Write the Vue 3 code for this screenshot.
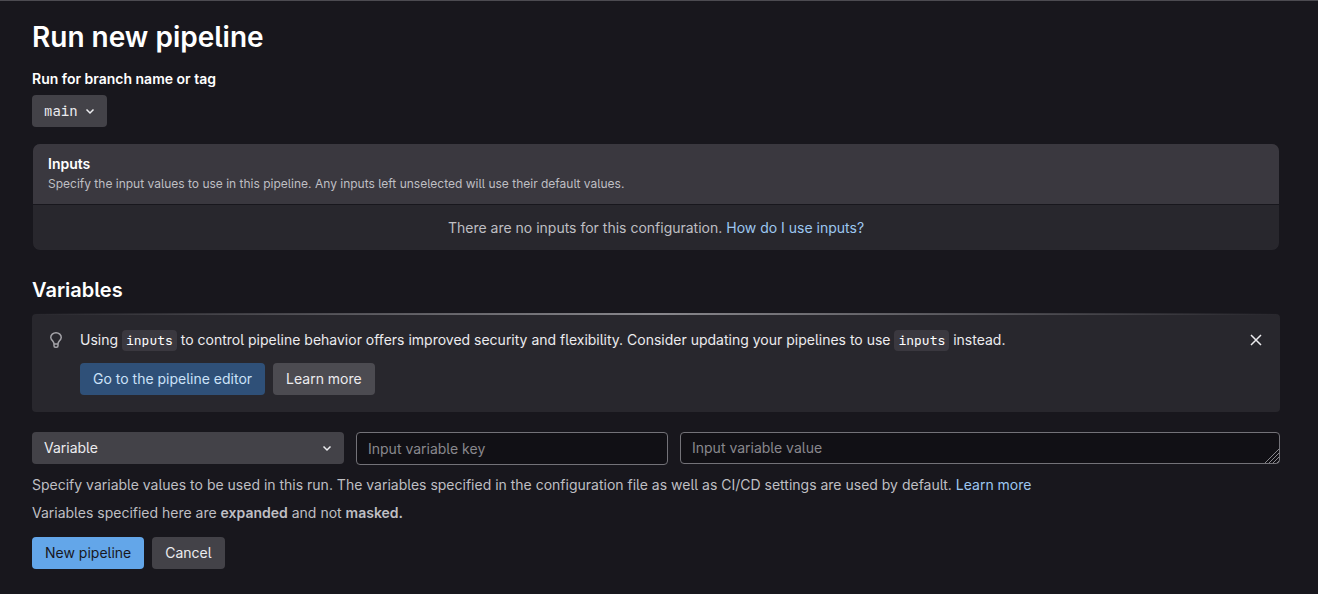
<script setup>
import { ref } from 'vue'

const branch = ref('main')
const type = ref('Variable')
const key = ref('')
const value = ref('')
</script>

<template>
  <main class="page">
    <h1 class="title">Run new pipeline</h1>

    <form class="form" @submit.prevent>
      <label class="label" for="branch">Run for branch name or tag</label>
      <div class="picker branch">
        <select id="branch" v-model="branch">
          <option>main</option>
        </select>
        <svg class="chevron" viewBox="0 0 16 16" aria-hidden="true">
          <path d="M4.5 6.5 8 10l3.5-3.5" />
        </svg>
      </div>

      <section class="card">
        <header class="card-head">
          <h2 class="card-title">Inputs</h2>
          <p class="card-text">Specify the input values to use in this pipeline. Any inputs left unselected will use their default values.</p>
        </header>
        <p class="card-body">There are no inputs for this configuration. <a href="#">How do I use inputs?</a></p>
      </section>

      <h2 class="subtitle">Variables</h2>

      <section class="tip">
        <svg class="bulb" viewBox="0 0 16 16" aria-hidden="true">
          <path d="M6 12c0-1.600-.6-2.200-1.500-3.300A5 5 0 0 1 2.750 5.500a5.250 4.750 0 0 1 10.500 0 5 5 0 0 1-1.750 3.200C10.600 9.800 10 10.400 10 12M6 12h4v1.800c0 .9-.6 1.450-1.400 1.450H7.400C6.600 15.250 6 14.700 6 13.800z" />
        </svg>
        <div class="tip-content">
          <p class="tip-text">Using <code>inputs</code> to control pipeline behavior offers improved security and flexibility. Consider updating your pipelines to use <code>inputs</code> instead.</p>
          <div class="actions">
            <button type="button" class="btn info">Go to the pipeline editor</button>
            <button type="button" class="btn muted">Learn more</button>
          </div>
        </div>
        <button type="button" class="close" aria-label="Dismiss">
          <svg viewBox="0 0 16 16" aria-hidden="true">
            <path d="m3 3 10 10m0-10L3 13" />
          </svg>
        </button>
      </section>

      <div class="row">
        <div class="picker">
          <select v-model="type" aria-label="Type">
            <option>Variable</option>
            <option>File</option>
          </select>
          <svg class="chevron" viewBox="0 0 16 16" aria-hidden="true">
            <path d="M4.500 6.500 8 10l3.500-3.500" />
          </svg>
        </div>
        <input v-model="key" class="field" type="text" placeholder="Input variable key" aria-label="Input variable key">
        <div class="area">
          <textarea v-model="value" class="field" rows="1" placeholder="Input variable value" aria-label="Input variable value"></textarea>
          <svg class="grip" viewBox="0 0 14 14" aria-hidden="true">
            <path d="M0 14 14 0M4 14 14 4M8 14l6-6M12 14l2-2" />
          </svg>
        </div>
      </div>

      <p class="help">Specify variable values to be used in this run. The variables specified in the configuration file as well as CI/CD settings are used by default. <a href="#">Learn more</a></p>
      <p class="help">Variables specified here are <strong>expanded</strong> and not <strong>masked.</strong></p>

      <div class="actions">
        <button type="submit" class="btn primary">New pipeline</button>
        <button type="button" class="btn">Cancel</button>
      </div>
    </form>
  </main>
</template>

<style>
body {
  background: #18171d;
}
</style>

<style scoped>
.page {
  box-sizing: border-box;
  border-top: 1px solid #4c4b51;
  padding: 16px 38px 24px 32px;
  color: #ececef;
  font: 14px/20px Inter, "Liberation Sans", sans-serif;
  font-feature-settings: "cv05";
}

h1, h2, p {
  margin: 0;
}

.title {
  color: #fff;
  font-size: 28px;
  line-height: 40px;
  font-weight: 600;
}

.label {
  display: block;
  margin: 12px 0 6px;
  color: #fff;
  font-weight: 600;
}

.picker {
  position: relative;
}

.branch {
  width: 75px;
  font-family: "JetBrains Mono", "DejaVu Sans Mono", monospace;
}

.picker select {
  display: block;
  box-sizing: border-box;
  width: 100%;
  height: 32px;
  padding: 0 28px 0 12px;
  border: 0;
  border-radius: 4px;
  background: #434248;
  color: #ececef;
  font: inherit;
  font-feature-settings: inherit;
  appearance: none;
}

.chevron {
  position: absolute;
  top: 8px;
  right: 9px;
  width: 16px;
  height: 16px;
  pointer-events: none;
}

svg {
  fill: none;
  stroke: currentColor;
  stroke-width: 1.5;
}

.card {
  margin: 16px 0 27px;
  border: 1px solid #18171d;
  border-radius: 8px;
  overflow: hidden;
  background: #28272d;
}

.card-head {
  padding: 10px 15px;
  border-bottom: 1px solid #18171d;
  background: #3a383f;
}

.card-title {
  color: #fff;
  font-size: 14px;
  line-height: 20px;
  font-weight: 600;
}

.card-text {
  color: #bfbfc3;
  font-size: 12px;
}

.card-body {
  padding: 13px 16px 12px;
  color: #bfbfc3;
  text-align: center;
}

a {
  color: #9dc7f1;
  text-decoration: none;
}

.subtitle {
  margin-bottom: 12px;
  color: #fff;
  font-size: 20px;
  line-height: 24px;
  font-weight: 600;
}

.tip {
  position: relative;
  display: flex;
  align-items: flex-start;
  gap: 16px;
  padding: 16px 16px 17px;
  border-radius: 4px;
  background: #28272d;
}

.tip::before {
  content: "";
  position: absolute;
  top: -1px;
  left: 0;
  right: 0;
  height: 2px;
  background: linear-gradient(to right, transparent, #89888d, transparent);
}

.bulb {
  flex: none;
  width: 16px;
  height: 16px;
  margin-top: 2px;
  color: #a4a3a8;
}

.tip-content {
  flex: 1;
}

code {
  padding: 2px 4px;
  border-radius: 4px;
  background: #3a383f;
  color: #fff;
  font: 13px/16px "JetBrains Mono", "DejaVu Sans Mono", monospace;
}

.actions {
  display: flex;
  gap: 8px;
  margin-top: 13px;
}

.btn {
  height: 32px;
  padding: 0 13px;
  border: 0;
  border-radius: 4px;
  background: #434248;
  color: #ececef;
  font: inherit;
  font-feature-settings: inherit;
}

.info {
  background: #2f5078;
  color: #cbe2f9;
}

.muted {
  background: #4c4b51;
}

.primary {
  background: #63a6e9;
  color: #18171d;
}

.close {
  display: flex;
  padding: 0;
  margin-top: 2px;
  border: 0;
  background: none;
  color: #ececef;
}

.close svg {
  width: 16px;
  height: 16px;
}

.row {
  display: grid;
  grid-template-columns: 312fr 312fr 600fr;
  align-items: start;
  gap: 12px;
  margin: 20px 0 10px;
}

.field {
  display: block;
  box-sizing: border-box;
  width: 100%;
  height: 33px;
  padding: 6px 11px;
  border: 1px solid #737278;
  border-radius: 4px;
  background: #111015;
  color: #ececef;
  font: inherit;
  font-feature-settings: inherit;
}

.field::placeholder {
  color: #89888d;
}

.area {
  position: relative;
}

.area .field {
  height: 32px;
  padding: 5px 11px;
  resize: none;
  overflow: hidden;
}

.grip {
  position: absolute;
  right: 1px;
  bottom: 1px;
  width: 14px;
  height: 14px;
  color: #89888d;
  stroke-width: 1;
}

.help {
  margin-bottom: 8px;
  color: #bfbfc3;
}

.help + .actions {
  margin-top: 14px;
}

strong {
  font-weight: 600;
}
</style>
